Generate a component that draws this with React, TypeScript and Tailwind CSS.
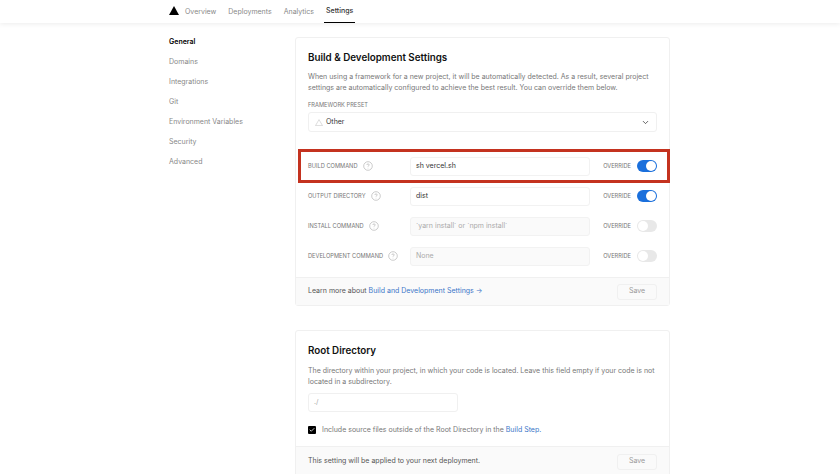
import React from 'react';
import { ChevronDown, Check } from 'lucide-react';

const FONT = 'font-["Inter","Liberation_Sans",sans-serif]';

const SIDE_LINKS = ['General', 'Domains', 'Integrations', 'Git', 'Environment Variables', 'Security', 'Advanced'];

const TABS = ['Overview', 'Deployments', 'Analytics', 'Settings'];

const COMMANDS = [
  { label: 'BUILD COMMAND', value: 'sh vercel.sh', on: true },
  { label: 'OUTPUT DIRECTORY', value: 'dist', on: true },
  { label: 'INSTALL COMMAND', placeholder: '`yarn install` or `npm install`', on: false },
  { label: 'DEVELOPMENT COMMAND', placeholder: 'None', on: false },
];

const HelpIcon = () => (
  <svg width="10" height="10" viewBox="0 0 10 10" fill="none" className="shrink-0">
    <circle cx="5" cy="5" r="4.3" stroke="#aaa" strokeWidth="0.6" />
    <path d="M3.8 4c0-.7.5-1.1 1.2-1.1s1.2.4 1.2 1c0 .9-1.2.9-1.2 1.8" stroke="#aaa" strokeWidth="0.6" fill="none" />
    <circle cx="5" cy="7.1" r="0.35" fill="#aaa" />
  </svg>
);

const Toggle = ({ on }: { on: boolean }) => (
  <div className={`w-[20px] h-[12px] rounded-full flex items-center p-px ${on ? 'bg-[#1a6fdc] justify-end' : 'bg-[#e8e8e8] justify-start'}`}>
    <div className="w-[10px] h-[10px] rounded-full bg-white" />
  </div>
);

const SaveButton = () => (
  <div className="w-[40px] h-[16px] border border-[#f0f0f0] rounded-[3px] flex items-center justify-center text-[7px] text-[#999]">
    Save
  </div>
);

const CommandRow = ({ label, value, placeholder, on }: { label: string; value?: string; placeholder?: string; on: boolean }) => (
  <div className="h-[30px] flex items-center">
    <div className="w-[102px] shrink-0 flex items-center gap-[5px] text-[5.7px] text-[#777] whitespace-nowrap">
      {label}
      <HelpIcon />
    </div>
    <div className={`w-[180px] h-[19px] shrink-0 border border-[#f2f2f2] rounded-[3px] px-[5px] flex items-center text-[7px] ${value ? 'bg-white text-[#333]' : 'bg-[#fafafa] text-[#aaa]'}`}>
      {value ?? placeholder}
    </div>
    <div className="ml-auto text-[5.7px] text-[#777]">OVERRIDE</div>
    <div className="ml-[6px]">
      <Toggle on={on} />
    </div>
  </div>
);

export default function App() {
  return (
    <div className={`relative w-[840px] h-[474px] overflow-hidden bg-white ${FONT}`}>
      <header className="h-[23px] flex pl-[169px] shadow-[0_1px_5px_rgba(0,0,0,0.08)]">
        <svg width="10" height="9" viewBox="0 0 10 9" className="mt-[6px]">
          <path d="M5 0l5 9H0z" fill="#000" />
        </svg>
        <nav className="ml-[4px] flex gap-[8px] text-[7px]">
          {TABS.map((tab) => (
            <div
              key={tab}
              className={`h-[23px] px-[2px] pt-[1px] flex items-center ${tab === 'Settings' ? 'text-[#333] border-b border-black font-medium' : 'text-[#888]'}`}
            >
              {tab}
            </div>
          ))}
        </nav>
      </header>

      <main className="flex pl-[169px] pt-[14px]">
        <aside className="w-[126px] -mt-[5px] flex flex-col text-[7px] text-[#888]">
          {SIDE_LINKS.map((link) => (
            <div key={link} className={`h-[20px] flex items-center ${link === 'General' ? 'text-black font-semibold' : ''}`}>
              {link}
            </div>
          ))}
        </aside>

        <div className="w-[375px] flex flex-col gap-[24px]">
          <section className="border border-[#f0f0f0] rounded-[3px] h-[269px] flex flex-col">
            <div className="flex-1 px-[12px] pt-[13px]">
              <h2 className="text-[9.8px] leading-[14px] font-semibold text-[#111]">Build &amp; Development Settings</h2>
              <p className="mt-[6px] text-[7px] leading-[11px] text-[#777]">
                When using a framework for a new project, it will be automatically detected. As a result, several project settings are automatically configured to achieve the best result. You can override them below.
              </p>
              <div className="mt-[8px] text-[5.7px] leading-[8px] text-[#777]">FRAMEWORK PRESET</div>
              <div className="mt-[3px] h-[20px] border border-[#f0f0f0] rounded-[3px] flex items-center pl-[6px] pr-[6px] text-[7px] text-[#333]">
                <svg width="8" height="7" viewBox="0 0 8 7" fill="none">
                  <path d="M4 .6L7.5 6.6H.5z" stroke="#bbb" strokeWidth="0.5" />
                </svg>
                <span className="ml-[3px]">Other</span>
                <ChevronDown size={9} className="ml-auto text-[#333]" />
              </div>
              <div className="mt-[19px]">
                {COMMANDS.map((cmd) => (
                  <CommandRow key={cmd.label} {...cmd} />
                ))}
              </div>
            </div>
            <div className="h-[28px] bg-[#fafafa] border-t border-[#f0f0f0] px-[12px] flex items-center justify-between text-[7px] text-[#555]">
              <span>
                Learn more about <span className="text-[#3a76c8]">Build and Development Settings →</span>
              </span>
              <SaveButton />
            </div>
          </section>

          <section className="border border-[#f0f0f0] rounded-[3px] h-[147px] flex flex-col shrink-0">
            <div className="flex-1 px-[12px] pt-[13px]">
              <h2 className="text-[9.8px] leading-[14px] font-semibold text-[#111]">Root Directory</h2>
              <p className="mt-[7px] text-[7px] leading-[11px] text-[#777]">
                The directory within your project, in which your code is located. Leave this field empty if your code is not located in a subdirectory.
              </p>
              <div className="mt-[6px] w-[150px] h-[19px] border border-[#f0f0f0] rounded-[3px] px-[5px] flex items-center text-[7px] text-[#aaa]">
                ./
              </div>
              <div className="mt-[13px] flex items-center text-[7px] text-[#777]">
                <div className="w-[8px] h-[8px] bg-black rounded-[1px] flex items-center justify-center">
                  <Check size={6} strokeWidth={3} className="text-white" />
                </div>
                <span className="ml-[6px]">
                  Include source files outside of the Root Directory in the <span className="text-[#3a76c8]">Build Step.</span>
                </span>
              </div>
            </div>
            <div className="h-[30px] bg-[#fafafa] border-t border-[#f0f0f0] px-[12px] flex items-center justify-between text-[7px] text-[#555]">
              <span>This setting will be applied to your next deployment.</span>
              <SaveButton />
            </div>
          </section>
        </div>
      </main>

      <div className="absolute left-[298px] top-[149px] w-[372px] h-[34px] border-[3px] border-[#c4321f]" />
    </div>
  );
}
